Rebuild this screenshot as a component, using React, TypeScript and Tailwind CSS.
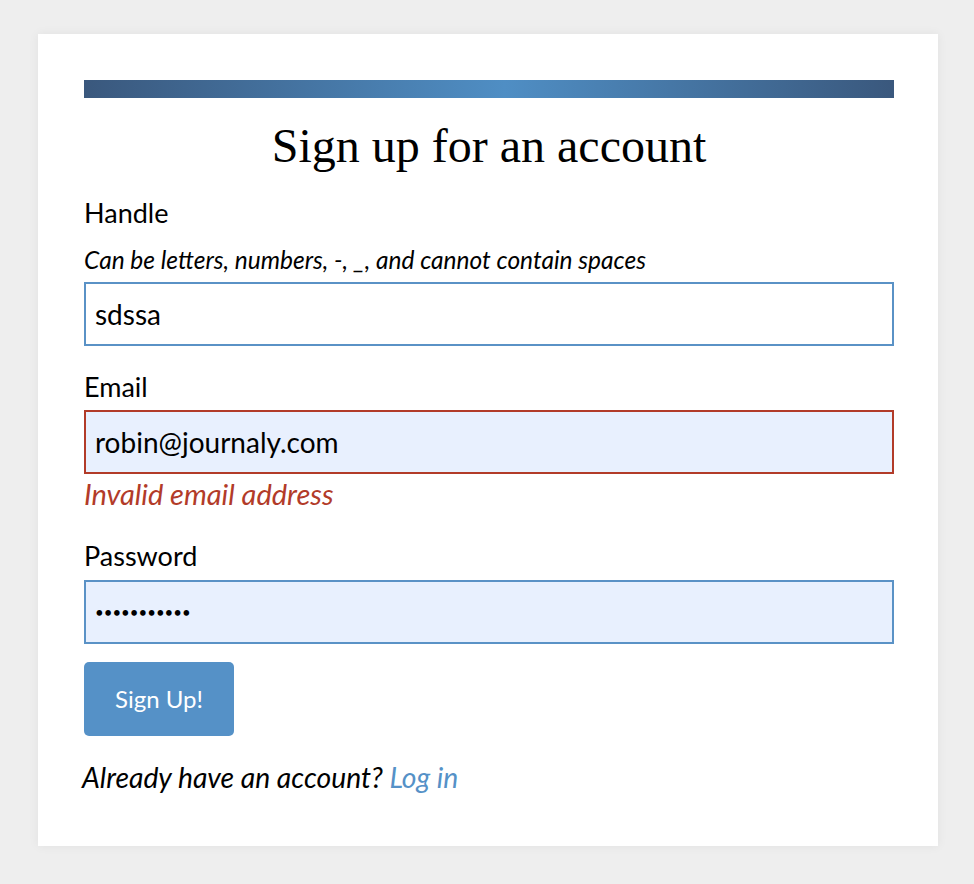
import React from "react";

export default function App() {
  const sans = "font-['Lato','Noto_Sans',sans-serif]";
  return (
    <div className="min-h-[884px] w-full bg-[#eeeeee] pt-[34px] pl-[38px]">
      <div className={`w-[900px] bg-white pl-[46px] pr-[44px] pt-[46px] pb-[49px] shadow-[0_0_10px_rgba(0,0,0,0.06)] ${sans} text-black`}>
        <div className="h-[18px] w-full bg-[linear-gradient(90deg,#3a587d_0%,#4f8ec4_52%,#3a587d_100%)]" />
        <h1 className="h-[96px] text-center font-['Liberation_Serif','Times_New_Roman',serif] text-[48px] leading-[96px] font-normal">
          Sign up for an account
        </h1>
        <div className="text-[27px] leading-[38px]">Handle</div>
        <div className="mt-[12px] mb-[6px] text-[24.5px] leading-[32px] italic">
          Can be letters, numbers, -, _, and cannot contain spaces
        </div>
        <input
          readOnly
          value="sdssa"
          className="block h-[64px] w-full border-2 border-[#5a92c6] bg-white px-[9px] text-[28px] text-black outline-none"
        />
        <div className="mt-[22px] mb-[4px] text-[27px] leading-[38px]">Email</div>
        <input
          readOnly
          value="robin@journaly.com"
          className="block h-[64px] w-full border-2 border-[#b23b29] bg-[#e8f0fe] px-[9px] text-[28px] text-black outline-none"
        />
        <div className="text-[29px] leading-[40px] italic text-[#b23b29]">Invalid email address</div>
        <div className="mt-[23px] mb-[5px] text-[27px] leading-[38px]">Password</div>
        <input
          readOnly
          type="password"
          value="abcdefghijk"
          className="block h-[64px] w-full border-2 border-[#5a92c6] bg-[#e8f0fe] px-[9px] text-[15px] tracking-[0px] text-black outline-none"
        />
        <button className="mt-[18px] block h-[74px] w-[150px] rounded-[5px] bg-[#5591c7] text-[24px] text-white">
          Sign Up!
        </button>
        <div className="mt-[21px] -ml-[2px] text-[28.3px] leading-[40px] italic">
          Already have an account? <a className="text-[#5591c7]">Log in</a>
        </div>
      </div>
    </div>
  );
}
